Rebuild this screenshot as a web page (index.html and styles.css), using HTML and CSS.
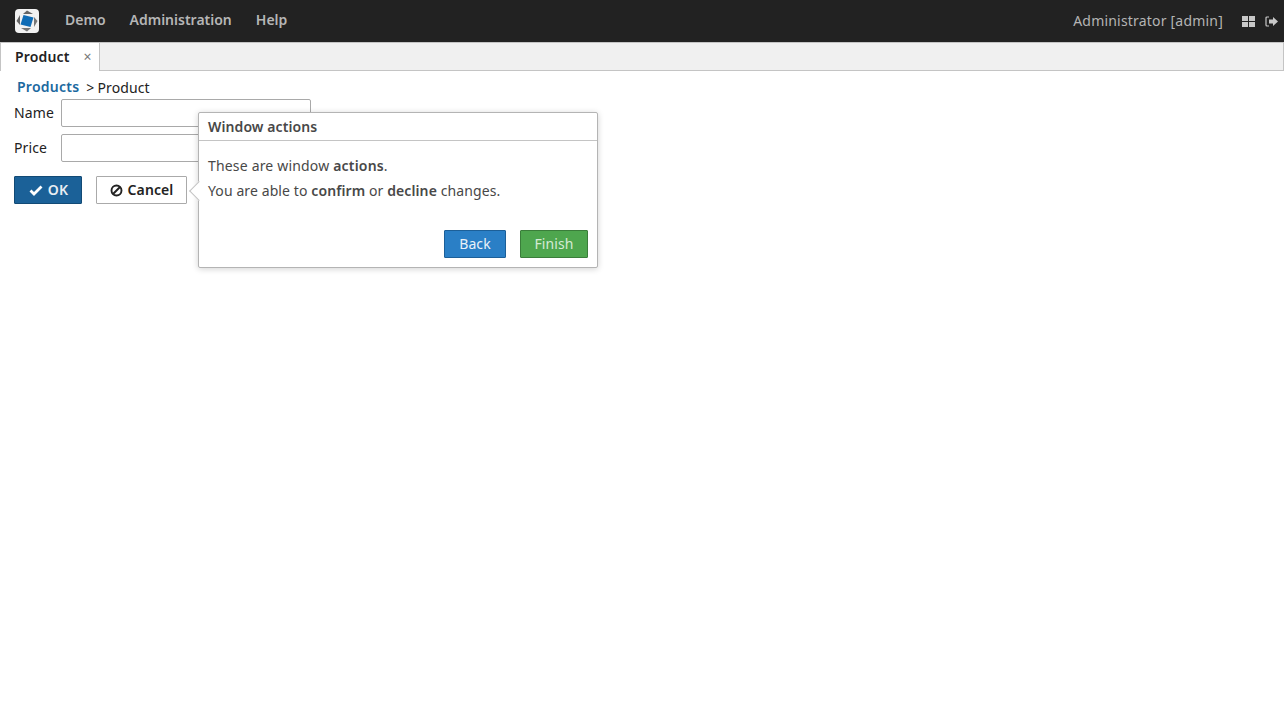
FILE: index.html
```html
<!DOCTYPE html>
<html lang="en">
<head>
<meta charset="utf-8">
<title>Product</title>
<link rel="stylesheet" href="styles.css">
</head>
<body>
<header class="topbar">
  <svg class="logo" width="24" height="24" viewBox="0 0 24 24">
    <rect x="0" y="0" width="24" height="24" rx="4" fill="#f2f2f2"/>
    <path d="M12 1.500 L18 5 L8 5 Z" fill="#666"/>
    <path d="M22.500 12 L19 18 L19 8 Z" fill="#777"/>
    <path d="M12 22.500 L6 19 L16 19 Z" fill="#777"/>
    <path d="M1.500 12 L5 6 L5 16 Z" fill="#666"/>
    <path d="M8.500 6 L18.500 8.500 L15.500 18 L5.500 15.500 Z" fill="#0f6cb6"/>
  </svg>
  <nav class="menu">
    <span class="menu-item">Demo</span>
    <span class="menu-item">Administration</span>
    <span class="menu-item">Help</span>
  </nav>
  <div class="userbox">
    <span class="username">Administrator [admin]</span>
    <svg class="icon-windows" width="13" height="11" viewBox="0 0 13 11">
      <path d="M0 0h6v5H0zM7 0h6v5H7zM0 6h6v5H0zM7 6h6v5H7z" fill="#c8c8c8"/>
    </svg>
    <svg class="icon-exit" width="13" height="11" viewBox="0 0 13 11">
      <path d="M4 1H2Q1 1 1 2V9Q1 10 2 10H4" fill="none" stroke="#c8c8c8" stroke-width="1.200"/>
      <path d="M4 3.500H8V1L13 5.500L8 10V7.500H4Z" fill="#c8c8c8"/>
    </svg>
  </div>
</header>

<div class="tabbar">
  <div class="tab">
    <span class="tab-title">Product</span>
    <span class="tab-close">×</span>
  </div>
</div>

<main class="content">
  <div class="breadcrumbs">
    <span class="crumb-link">Products</span>
    <span class="crumb-sep">&gt;</span>
    <span class="crumb-current">Product</span>
  </div>
  <div class="form">
    <label class="field-label">Name</label>
    <input class="field-input" type="text">
    <label class="field-label">Price</label>
    <input class="field-input" type="text">
  </div>
  <div class="actions">
    <button class="btn btn-ok">
      <svg width="14" height="12" viewBox="0 0 14 12"><path d="M1.500 6.500L5 10L12.500 2.500" fill="none" stroke="#fff" stroke-width="2.800"/></svg>
      <span class="btn-label">OK</span>
    </button>
    <button class="btn btn-cancel">
      <svg width="13" height="13" viewBox="0 0 13 13"><circle cx="6.500" cy="6.500" r="5" fill="none" stroke="#222" stroke-width="1.900"/><path d="M3 10L10 3" stroke="#222" stroke-width="1.900"/></svg>
      <span class="btn-label">Cancel</span>
    </button>
  </div>
</main>

<section class="popover">
  <div class="popover-arrow"></div>
  <div class="popover-header">Window actions</div>
  <div class="popover-body">
    <p class="line-wide">These are window <b>actions</b>.</p>
    <p>You are able to <b>confirm</b> or <b>decline</b> changes.</p>
  </div>
  <div class="popover-footer">
    <button class="btn btn-back"><span class="btn-label">Back</span></button>
    <button class="btn btn-finish"><span class="btn-label">Finish</span></button>
  </div>
</section>
</body>
</html>
```

FILE: styles.css
```css
* { box-sizing: border-box; }
html, body { margin: 0; height: 100%; }
body {
  font-family: "Noto Sans", "Open Sans", sans-serif;
  font-size: 14px;
  letter-spacing: 0.1px;
  color: #333;
  background: #fff;
  overflow: hidden;
}
.topbar {
  display: flex;
  align-items: center;
  height: 42px;
  background: #222;
  padding: 0 6px 0 15px;
}
.logo { flex: none; }
.menu { display: flex; gap: 24px; margin-left: 26px; margin-top: -4px; letter-spacing: 0; }
.menu-item { color: #b6b6b6; font-weight: 600; font-size: 14px; }
.userbox { margin-left: auto; display: flex; align-items: center; color: #b4b4b4; }
.username { font-size: 14px; margin-top: -2px; letter-spacing: 0.2px; }
.icon-windows { margin-left: 19px; }
.icon-exit { margin-left: 10px; }

.tabbar {
  height: 29px;
  background: #f0f0f0;
  border: 1px solid #c4c4c4;
  border-left: 0;
  display: flex;
}
.tab {
  width: 100px;
  height: 29px;
  margin-top: -1px;
  background: #fff;
  border: 1px solid #c4c4c4;
  border-bottom: 0;
  display: flex;
  align-items: center;
  padding: 0 0 2px 14px;
}
.tab-title { font-weight: 600; color: #222; letter-spacing: 0.15px; }
.tab-close { margin-left: 14px; color: #777; font-size: 14px; }

.content { padding: 6px 14px 0; }
.breadcrumbs { display: flex; height: 22px; align-items: center; padding: 0 0 2px 3px; color: #222; }
.crumb-link { color: #1b699f; font-weight: 600; margin-top: -2px; letter-spacing: 0.25px; }
.crumb-sep { margin-left: 7px; }
.crumb-current { margin-left: 3px; }
.form {
  display: grid;
  grid-template-columns: 47px 250px;
  row-gap: 7px;
  align-items: center;
}
.field-label { color: #222; padding-bottom: 2px; }
.field-input {
  height: 28px;
  width: 250px;
  border: 1px solid #a9a9a9;
  border-radius: 2px;
  background: #fff;
  padding: 0 6px;
}
.actions { display: flex; gap: 14px; margin-top: 14px; }
.btn {
  font-family: inherit;
  font-size: 14px;
  letter-spacing: 0.1px;
  height: 28px;
  border-radius: 1px;
  display: inline-flex;
  align-items: center;
  justify-content: center;
  padding: 0;
  margin: 0;
}
.btn-label { margin-top: -2px; }
.btn-ok {
  width: 68px;
  gap: 5px;
  padding-left: 1px;
  background: #1b6198;
  border: 1px solid #124a75;
  color: #e8eef3;
  font-weight: 600;
}
.btn-cancel {
  width: 91px;
  gap: 5px;
  background: #fff;
  border: 1px solid #aaa;
  color: #222;
  font-weight: 600;
}
.popover {
  position: absolute;
  left: 198px;
  top: 112px;
  width: 400px;
  height: 156px;
  background: #fff;
  border: 1px solid #b4b4b4;
  border-radius: 2px;
  box-shadow: 0 1px 6px rgba(0, 0, 0, 0.18);
  color: #484848;
}
.popover-arrow {
  position: absolute;
  left: -7px;
  top: 71px;
  width: 14px;
  height: 14px;
  transform: rotate(45deg);
  background: #fff;
  border-left: 1px solid #c4c4c4;
  border-bottom: 1px solid #c4c4c4;
}
.popover-header {
  position: relative;
  height: 28px;
  padding-left: 9px;
  border-bottom: 1px solid #c4c4c4;
  font-weight: 600;
  line-height: 27px;
}
.popover-body { position: relative; padding: 12px 9px 0; height: 89px; }
.popover-body p { margin: 0; height: 25px; line-height: 25px; }
.popover-body .line-wide { letter-spacing: 0.18px; }
.popover-body b { font-weight: 600; }
.popover-footer { display: flex; justify-content: flex-end; gap: 14px; padding-right: 9px; }
.btn-back { width: 62px; background: #2a7fc6; border: 1px solid #1c5f98; color: #e8f1f8; }
.btn-finish { width: 68px; background: #4ea64e; border: 1px solid #3a7d3a; color: #d5ebd5; }
```
